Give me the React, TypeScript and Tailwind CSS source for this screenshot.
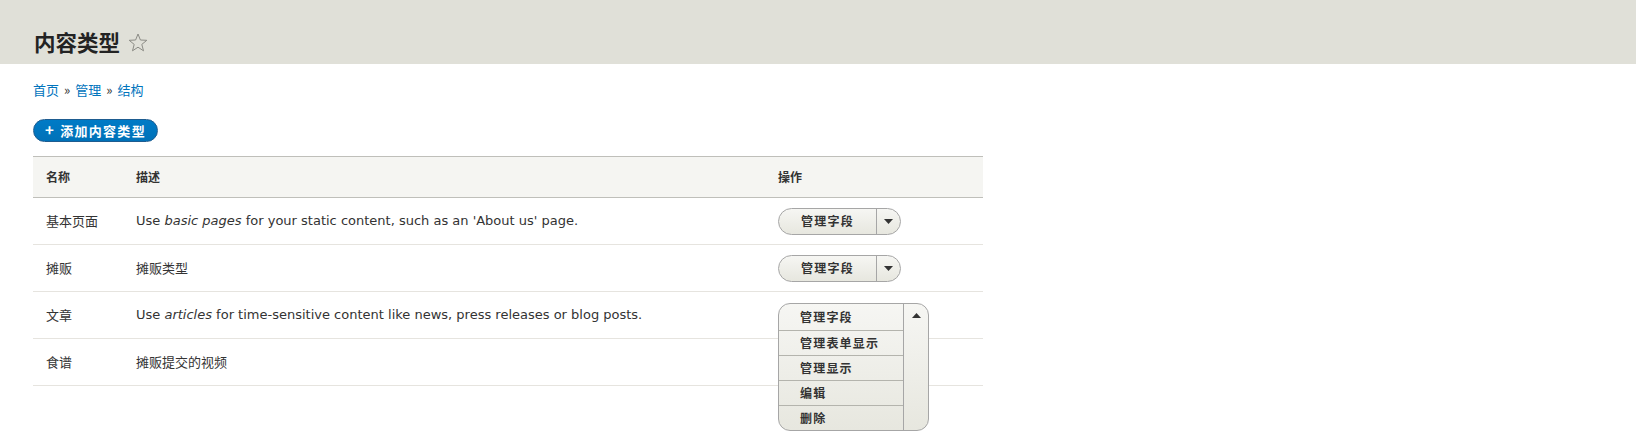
import React from "react";

const cjk = "font-['Noto_Sans_CJK_SC',sans-serif]";
const body = "font-['DejaVu_Sans','Noto_Sans_CJK_SC',sans-serif]";

const ROWS = [
  {
    name: "基本页面",
    desc: (
      <>
        Use <em>basic pages</em> for your static content, such as an 'About us' page.
      </>
    ),
    open: false,
  },
  { name: "摊贩", desc: <span className={cjk}>摊贩类型</span>, open: false },
  {
    name: "文章",
    desc: (
      <>
        Use <em>articles</em> for time-sensitive content like news, press releases or blog posts.
      </>
    ),
    open: true,
  },
  { name: "食谱", desc: <span className={cjk}>摊贩提交的视频</span>, open: false, hidden: true },
];

const MENU = ["管理字段", "管理表单显示", "管理显示", "编辑", "删除"];

function Arrow({ up }: { up?: boolean }) {
  return (
    <svg width="9" height="5" viewBox="0 0 9 5">
      <polygon points={up ? "0,5 9,5 4.5,0" : "0,0 9,0 4.5,5"} fill="#333" />
    </svg>
  );
}

function DropButton() {
  return (
    <div className="inline-flex h-[27px] rounded-full border border-[#a6a6a6] bg-gradient-to-b from-[#f6f6f3] to-[#e7e7df] overflow-hidden">
      <span className={`w-[97px] flex items-center justify-center text-[12px] font-bold tracking-[0.1em] text-[#333] ${cjk}`}>
        管理字段
      </span>
      <span className="w-[24px] flex items-center justify-center border-l border-[#a6a6a6]">
        <Arrow />
      </span>
    </div>
  );
}

function OpenDropButton() {
  return (
    <div className="absolute top-[11px] left-[13px] z-10 flex w-[151px] rounded-[12px] border border-[#a6a6a6] bg-gradient-to-b from-[#f6f6f3] to-[#e7e7df] overflow-hidden">
      <div className="w-[124px] flex flex-col">
        {MENU.map((m, i) => (
          <div
            key={m}
            className={`flex items-center pl-[21px] text-[12px] font-bold tracking-[0.1em] text-[#333] ${cjk} ${
              i > 0 ? "h-[25px] border-t border-[#b4b4ad]" : "h-[26px]"
            }`}
          >
            {m}
          </div>
        ))}
      </div>
      <div className="flex-1 border-l border-[#a6a6a6] flex justify-center pt-[9px]">
        <Arrow up />
      </div>
    </div>
  );
}

function Star() {
  return (
    <svg width="20" height="19" viewBox="0 0 20 19">
      <polygon
        points="10,1 12.4,7 18.8,7.3 13.8,11.4 15.5,17.8 10,14.2 4.5,17.8 6.2,11.4 1.2,7.3 7.6,7"
        fill="none"
        stroke="#8b8b85"
        strokeWidth="1"
        strokeLinejoin="round"
      />
    </svg>
  );
}

export default function App() {
  return (
    <div className={`w-[1636px] h-[433px] overflow-hidden bg-white text-[#333] ${body}`}>
      <div className="h-[64px] bg-[#e0e0d8] pl-[34px] pt-[28px]">
        <h1 className="flex items-center gap-[8px] leading-[28px]">
          <span className={`text-[21.5px] font-bold text-[#232323] ${cjk}`}>内容类型</span>
          <Star />
        </h1>
      </div>

      <div className="pl-[33px]">
        <nav className={`mt-[16px] h-[20px] flex items-center text-[13px] ${cjk}`}>
          <a className="text-[#0074bd]">首页</a>
          <span className="mx-[5px] text-[#333]">»</span>
          <a className="text-[#0074bd]">管理</a>
          <span className="mx-[5px] text-[#333]">»</span>
          <a className="text-[#0074bd]">结构</a>
        </nav>

        <button
          className={`mt-[19px] h-[23px] px-[11px] rounded-full border border-[#1e5c90] bg-gradient-to-b from-[#007bc6] to-[#0071b8] text-white text-[13px] font-bold tracking-[0.1em] flex items-center ${cjk}`}
        >
          <span className="mr-[5px] text-[15px]">+</span>添加内容类型
        </button>

        <div className="mt-[14px] w-[950px]">
          <div className="grid grid-cols-[90px_642px_218px] h-[42px] items-center bg-[#f5f5f2] border-y border-[#bfbfba] text-[12px] font-bold text-[#333]">
            <div className={`pl-[13px] ${cjk}`}>名称</div>
            <div className={`pl-[13px] ${cjk}`}>描述</div>
            <div className={`pl-[13px] ${cjk}`}>操作</div>
          </div>
          {ROWS.map((r) => (
            <div
              key={r.name}
              className="grid grid-cols-[90px_642px_218px] h-[47px] items-center border-b border-[#e6e4df] text-[13px] text-[#333]"
            >
              <div className={`pl-[13px] ${cjk}`}>{r.name}</div>
              <div className="pl-[13px]">{r.desc}</div>
              <div className="pl-[13px] relative h-full flex items-center">
                {r.open ? <OpenDropButton /> : r.hidden ? null : <DropButton />}
              </div>
            </div>
          ))}
        </div>
      </div>
    </div>
  );
}
